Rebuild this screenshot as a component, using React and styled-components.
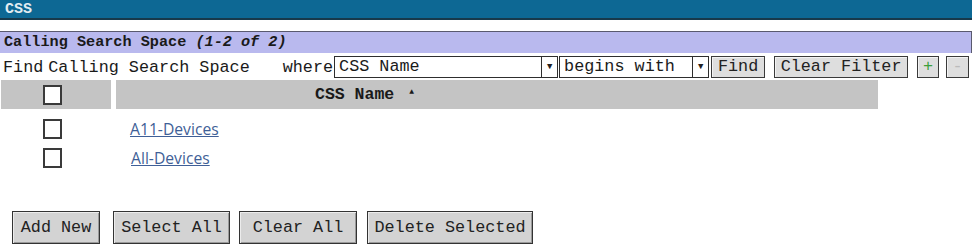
import React from 'react';
import styled, { createGlobalStyle } from 'styled-components';

const GlobalStyle = createGlobalStyle`
  body {
    margin: 0;
    background: #fff;
    font-family: "Liberation Mono", "Courier New", monospace;
  }
`;

const Page = styled.div`
  width: 974px;
  height: 245px;
  overflow: hidden;
  color: #1a1a1a;
`;

const TitleBar = styled.div`
  width: 972px;
  height: 20px;
  background: #0d6894;
  border-bottom: 2px solid #17394b;
  color: #e3edf2;
  font-weight: bold;
  font-size: 15px;
  line-height: 20px;
  padding-left: 5px;
  box-sizing: border-box;
`;

const SectionBar = styled.div`
  margin-top: 11px;
  width: 972px;
  height: 22px;
  box-sizing: border-box;
  background: #b9b9ee;
  border-top: 1px solid #5a5a6e;
  border-right: 1px solid #5a5a6e;
  padding-left: 4px;
  font-size: 15.2px;
  font-weight: bold;
  line-height: 21px;
  em {
    font-style: italic;
  }
`;

const FilterRow = styled.div`
  display: flex;
  align-items: center;
  height: 22px;
  margin-top: 3px;
  font-size: 16.8px;
`;

const Label = styled.span`
  margin-left: ${(p) => p.$gap || 0}px;
  white-space: pre;
`;

const Select = styled.div`
  display: flex;
  width: ${(p) => p.$w}px;
  height: 22px;
  box-sizing: border-box;
  border: 1px solid #2e2e2e;
  background: #fff;
  margin-left: ${(p) => p.$gap || 0}px;
`;

const SelectText = styled.span`
  flex: 1;
  padding-left: 4px;
  line-height: 20px;
  white-space: pre;
`;

const Arrow = styled.span`
  width: 15px;
  border-left: 1px solid #2e2e2e;
  font-size: 9px;
  line-height: 20px;
  text-align: center;
  color: #222;
`;

const SmallButton = styled.button`
  width: ${(p) => p.$w}px;
  height: 22px;
  margin-left: ${(p) => p.$gap || 0}px;
  padding: 0;
  box-sizing: border-box;
  border: 1px solid #3a3a3a;
  box-shadow: inset 1px 1px #f3f3f3;
  background: #dedede;
  font-family: inherit;
  font-size: 16.8px;
  color: ${(p) => p.$color || '#222'};
  line-height: 20px;
`;

const HeaderRow = styled.div`
  display: grid;
  grid-template-columns: 110px 762px;
  column-gap: 5px;
  margin-top: 2px;
  margin-left: 1px;
  height: 29px;
`;

const HeaderCell = styled.div`
  background: #c4c4c4;
  display: flex;
  align-items: center;
  padding-left: ${(p) => p.$pad}px;
  font-size: 16.5px;
  font-weight: bold;
`;

const SortMark = styled.span`
  font-size: 8px;
  margin-left: 15px;
  align-self: flex-start;
  margin-top: 7px;
`;

const Box = styled.span`
  display: inline-block;
  width: 19px;
  height: 20px;
  box-sizing: border-box;
  border: 2px solid #3a3a3a;
  background: #fff;
`;

const Row = styled.div`
  display: flex;
  align-items: center;
  height: 29px;
  padding-left: 43px;
  margin-top: ${(p) => p.$top || 0}px;
`;

const Link = styled.a`
  margin-left: ${(p) => p.$gap}px;
  font-family: "Open Sans", "Noto Sans", sans-serif;
  font-size: 15.7px;
  color: #3f5f97;
  text-decoration: underline;
`;

const Footer = styled.div`
  display: flex;
  margin-top: 39px;
  padding-left: 12px;
`;

const ActionButton = styled.button`
  width: ${(p) => p.$w}px;
  height: 33px;
  margin-left: ${(p) => p.$gap || 0}px;
  padding: 0;
  box-sizing: border-box;
  border: 1px solid #333;
  box-shadow: inset 1px 1px #ececec, inset -1px -1px #9a9a9a;
  background: #d3d3d3;
  font-family: inherit;
  font-size: 16.8px;
  color: #222;
`;

export default function App() {
  return (
    <Page>
      <GlobalStyle />
      <TitleBar>CSS</TitleBar>
      <SectionBar>
        Calling Search Space <em>(1-2 of 2)</em>
      </SectionBar>
      <FilterRow>
        <Label $gap={3}>Find</Label>
        <Label $gap={5}>Calling Search Space</Label>
        <Label $gap={33}>where</Label>
        <Select $w={224} $gap={1}>
          <SelectText>CSS Name</SelectText>
          <Arrow>▼</Arrow>
        </Select>
        <Select $w={150} $gap={1}>
          <SelectText>begins with</SelectText>
          <Arrow>▼</Arrow>
        </Select>
        <SmallButton $w={54} $gap={2}>Find</SmallButton>
        <SmallButton $w={134} $gap={9}>Clear Filter</SmallButton>
        <SmallButton $w={22} $gap={9} $color="#3aa03a">+</SmallButton>
        <SmallButton $w={23} $gap={7} $color="#bbb">-</SmallButton>
      </FilterRow>
      <HeaderRow>
        <HeaderCell $pad={42}>
          <Box />
        </HeaderCell>
        <HeaderCell $pad={199}>
          CSS Name
          <SortMark>▲</SortMark>
        </HeaderCell>
      </HeaderRow>
      <Row $top={5}>
        <Box />
        <Link href="#" $gap={68}>A11-Devices</Link>
      </Row>
      <Row>
        <Box />
        <Link href="#" $gap={69}>All-Devices</Link>
      </Row>
      <Footer>
        <ActionButton $w={88}>Add New</ActionButton>
        <ActionButton $w={117} $gap={13}>Select All</ActionButton>
        <ActionButton $w={118} $gap={9}>Clear All</ActionButton>
        <ActionButton $w={166} $gap={10}>Delete Selected</ActionButton>
      </Footer>
    </Page>
  );
}
